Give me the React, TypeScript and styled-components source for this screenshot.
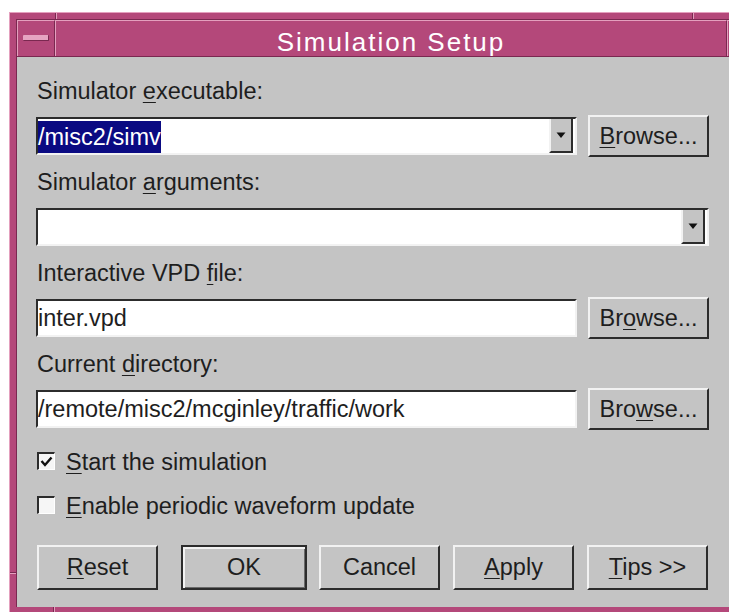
import React from "react";
import styled, { createGlobalStyle } from "styled-components";

const PINK = "#b4487a";
const PINK_LIGHT = "#e4a0be";
const PINK_DARK = "#7a2850";
const FACE = "#c4c4c4";
const INK = "#1e1e1e";
const LIGHT = "#f2f2f2";
const SHADOW = "#2c2c2c";

const GlobalStyle = createGlobalStyle`
  html, body {
    margin: 0;
    padding: 0;
    background: #ffffff;
    overflow: hidden;
  }
  body {
    font-family: "Liberation Sans", Arial, Helvetica, sans-serif;
  }
`;

/* the visible screen area; the dialog runs past its right edge */
const Screen = styled.div`
  width: 729px;
  height: 613px;
  overflow: hidden;
  padding: 12px 0 0 9px;
  box-sizing: border-box;
  background: #ffffff;
`;

/* outer bevel line of the window frame */
const Frame = styled.div`
  position: relative;
  background: ${FACE};
  border-top: 1px solid ${PINK_LIGHT};
  border-left: 1px solid ${PINK_LIGHT};
`;

/* the pink resize border itself (right edge is off screen) */
const FrameBody = styled.div`
  background: ${FACE};
  border-top: 6px solid ${PINK};
  border-left: 6px solid ${PINK};
  border-bottom: 5px solid ${PINK};
`;

/* resize-handle divisions cut into the frame */
const Notch = styled.span<{ $side: "top" | "left" | "bottom"; $at: number }>`
  position: absolute;
  background: ${PINK_DARK};
  ${(p) =>
    p.$side === "top"
      ? `left:${p.$at}px; top:0; width:1px; height:6px; box-shadow:1px 0 0 ${PINK_LIGHT};`
      : p.$side === "bottom"
      ? `left:${p.$at}px; bottom:0; width:1px; height:5px; box-shadow:1px 0 0 ${PINK_LIGHT};`
      : `top:${p.$at}px; left:0; height:1px; width:6px; box-shadow:0 1px 0 ${PINK_LIGHT};`}
`;

const Inner = styled.div`
  border-top: 1px solid ${PINK_DARK};
  border-left: 1px solid ${PINK_DARK};
  background: ${FACE};
`;

const TitleBar = styled.div`
  display: flex;
  height: 37px;
  box-sizing: border-box;
  background: ${PINK};
  border-bottom: 1px solid ${PINK_DARK};
`;

const TitlePart = styled.div`
  box-sizing: border-box;
  border-top: 1px solid ${PINK_LIGHT};
  border-left: 1px solid ${PINK_LIGHT};
  border-right: 1px solid ${PINK_DARK};
`;

const MenuButton = styled(TitlePart)`
  width: 38px;
  flex: none;
  display: flex;
  align-items: center;
  justify-content: center;
  padding-bottom: 2px;
`;

const MenuDash = styled.span`
  width: 25px;
  height: 5px;
  background: #e6a4c2;
  border-right: 1px solid ${PINK_DARK};
  border-bottom: 1px solid ${PINK_DARK};
  border-radius: 1px;
`;

const Title = styled(TitlePart)`
  width: 672px;
  flex: none;
  padding-top: 7px;
  line-height: 28px;
  text-align: center;
  color: #ffffff;
  font-size: 26px;
  letter-spacing: 2px;
`;

const TitleRest = styled(TitlePart)`
  flex: 1;
  border-right: none;
`;

/* ---------- dialog body ---------- */

const Content = styled.div`
  width: 673px;
  padding: 21px 0 17px 19px;
  color: ${INK};
  font-size: 23.5px;
`;

const Key = styled.span`
  text-decoration: underline;
  text-decoration-thickness: 1px;
  text-underline-offset: 3px;
`;

const Group = styled.div`
  display: flex;
  flex-direction: column;
  & + & {
    margin-top: 12px;
  }
`;

const Label = styled.div`
  height: 26px;
  line-height: 26px;
  padding-left: 1px;
  margin-bottom: 11px;
`;

const Row = styled.div`
  display: flex;
  align-items: center;
  gap: 11px;
  height: 42px;
`;

const Field = styled.div<{ $wide?: boolean }>`
  display: flex;
  align-items: center;
  width: ${(p) => (p.$wide ? 673 : 541)}px;
  height: 38px;
  box-sizing: border-box;
  background: #ffffff;
  border-top: 2px solid ${SHADOW};
  border-left: 2px solid ${SHADOW};
  border-right: 2px solid ${LIGHT};
  border-bottom: 2px solid ${LIGHT};
  line-height: 34px;
  white-space: nowrap;
`;

const FieldText = styled.span`
  padding-left: 0;
`;

const Selected = styled.span`
  display: inline-block;
  margin-top: 1px;
  height: 32px;
  line-height: 32px;
  background: #0a0a82;
  color: #ffffff;
`;

const ArrowButton = styled.span`
  margin-left: auto;
  margin-right: 2px;
  width: 24px;
  height: 34px;
  box-sizing: border-box;
  background: ${FACE};
  border-left: 2px solid ${LIGHT};
  border-right: 2px solid ${SHADOW};
  border-bottom: 2px solid ${SHADOW};
  display: flex;
  align-items: center;
  justify-content: center;
`;

const PushButton = styled.button<{ $tall?: boolean }>`
  width: 121px;
  height: ${(p) => (p.$tall ? 45 : 42)}px;
  flex: none;
  box-sizing: border-box;
  padding: 0;
  margin: 0;
  background: ${FACE};
  color: ${INK};
  font: inherit;
  border-top: 2px solid ${LIGHT};
  border-left: 2px solid ${LIGHT};
  border-right: 2px solid ${SHADOW};
  border-bottom: 2px solid ${SHADOW};
`;

const DefaultButton = styled(PushButton)`
  width: 126px;
  margin-left: 10px;
  margin-right: -1px;
  border: 2px solid ${SHADOW};
  box-shadow: inset 2px 2px 0 ${LIGHT}, inset -1px -1px 0 #6a6a6a;
`;

const Toggles = styled.div`
  margin-top: 19px;
  display: flex;
  flex-direction: column;
  gap: 18px;
`;

const Toggle = styled.label`
  display: flex;
  align-items: center;
  gap: 11px;
  height: 26px;
  line-height: 26px;
  padding-left: 1px;
`;

const Box = styled.span`
  width: 18px;
  height: 18px;
  box-sizing: border-box;
  margin-top: -2px;
  background: #f6f6f6;
  border-top: 2px solid ${SHADOW};
  border-left: 2px solid ${SHADOW};
  border-right: 1px solid #ffffff;
  border-bottom: 1px solid #ffffff;
  display: flex;
  align-items: center;
  justify-content: center;
`;

const ButtonBar = styled.div`
  margin-top: 26px;
  display: flex;
  gap: 13px;
  padding-left: 1px;
`;

const DownArrow = () => (
  <svg width="10" height="7" viewBox="0 0 10 7">
    <path d="M0.5 0.5 H9.5 L5 6 Z" fill="#111" />
  </svg>
);

const Check = () => (
  <svg width="13" height="11" viewBox="0 0 13 11">
    <path d="M1.5 5 L5 9 L11.5 1.5" stroke="#111" strokeWidth="2.4" fill="none" />
  </svg>
);

export default function App() {
  return (
    <>
      <GlobalStyle />
      <Screen>
        <Frame>
          <FrameBody>
            <Inner>
              <TitleBar>
                <MenuButton>
                  <MenuDash />
                </MenuButton>
                <Title>Simulation Setup</Title>
                <TitleRest />
              </TitleBar>

              <Content>
                <Group>
                  <Label>
                    Simulator <Key>e</Key>xecutable:
                  </Label>
                  <Row>
                    <Field>
                      <Selected>/misc2/simv</Selected>
                      <ArrowButton>
                        <DownArrow />
                      </ArrowButton>
                    </Field>
                    <PushButton>
                      <Key>B</Key>rowse...
                    </PushButton>
                  </Row>
                </Group>

                <Group>
                  <Label>
                    Simulator <Key>a</Key>rguments:
                  </Label>
                  <Row>
                    <Field $wide>
                      <ArrowButton>
                        <DownArrow />
                      </ArrowButton>
                    </Field>
                  </Row>
                </Group>

                <Group>
                  <Label>
                    Interactive VPD <Key>f</Key>ile:
                  </Label>
                  <Row>
                    <Field>
                      <FieldText>inter.vpd</FieldText>
                    </Field>
                    <PushButton>
                      Br<Key>o</Key>wse...
                    </PushButton>
                  </Row>
                </Group>

                <Group>
                  <Label>
                    Current <Key>d</Key>irectory:
                  </Label>
                  <Row>
                    <Field>
                      <FieldText>/remote/misc2/mcginley/traffic/work</FieldText>
                    </Field>
                    <PushButton>
                      Bro<Key>w</Key>se...
                    </PushButton>
                  </Row>
                </Group>

                <Toggles>
                  <Toggle>
                    <Box>
                      <Check />
                    </Box>
                    <span>
                      <Key>S</Key>tart the simulation
                    </span>
                  </Toggle>
                  <Toggle>
                    <Box />
                    <span>
                      <Key>E</Key>nable periodic waveform update
                    </span>
                  </Toggle>
                </Toggles>

                <ButtonBar>
                  <PushButton $tall>
                    <Key>R</Key>eset
                  </PushButton>
                  <DefaultButton $tall>OK</DefaultButton>
                  <PushButton $tall>Cancel</PushButton>
                  <PushButton $tall>
                    <Key>A</Key>pply
                  </PushButton>
                  <PushButton $tall>
                    <Key>T</Key>ips &gt;&gt;
                  </PushButton>
                </ButtonBar>
              </Content>
            </Inner>
          </FrameBody>
          <Notch $side="top" $at={45} />
          <Notch $side="top" $at={682} />
          <Notch $side="left" $at={559} />
          <Notch $side="bottom" $at={43} />
        </Frame>
      </Screen>
    </>
  );
}
